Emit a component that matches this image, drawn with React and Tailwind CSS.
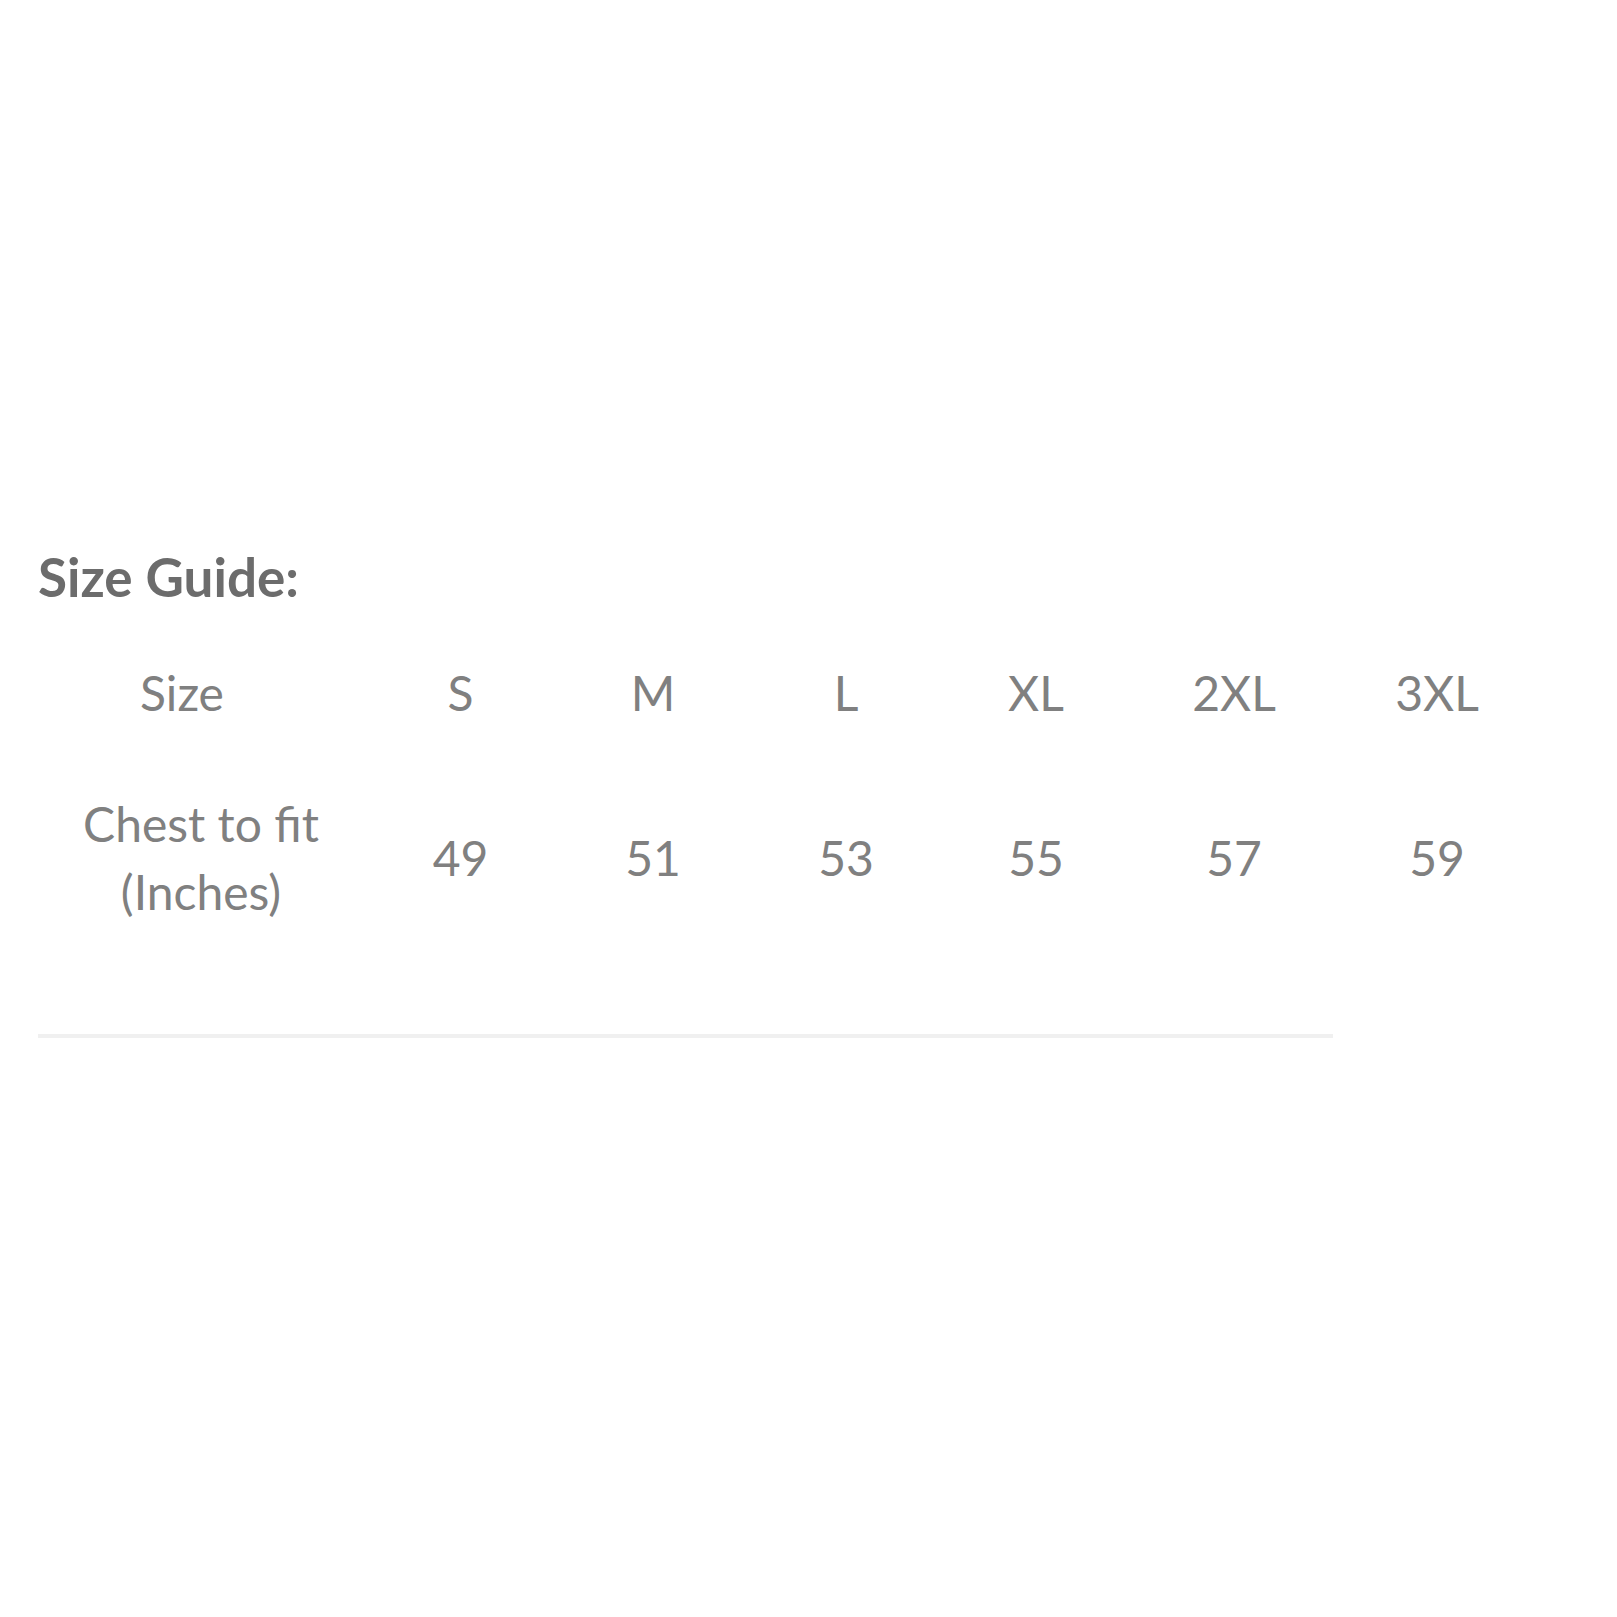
const sizes = ["S", "M", "L", "XL", "2XL", "3XL"];
const chest = ["49", "51", "53", "55", "57", "59"];

export default function App() {
  return (
    <div className="min-h-[1617px] bg-white pl-[38px] pt-[545px] font-['Lato','Liberation_Sans',sans-serif]">
      <h2 className="text-[53px] leading-[63px] font-bold text-[#6c6c6c]">
        Size Guide:
      </h2>

      <div className="mt-[51px] grid grid-cols-[326px_193px_192px_194px_186px_210px_196px] text-[48px] text-[#808080] text-center">
        <div className="leading-[68px] pr-[38px]">Size</div>
        {sizes.map((s) => (
          <div key={s} className="leading-[68px]">
            {s}
          </div>
        ))}

        <div className="mt-[63px] leading-[68px]">
          Chest to fit
          <br />
          (Inches)
        </div>
        {chest.map((c) => (
          <div key={c} className="mt-[63px] flex items-center justify-center leading-[68px]">
            {c}
          </div>
        ))}
      </div>

      <div className="mt-[108px] h-[4px] w-[1295px] bg-[#f0f0f0]" />
    </div>
  );
}
